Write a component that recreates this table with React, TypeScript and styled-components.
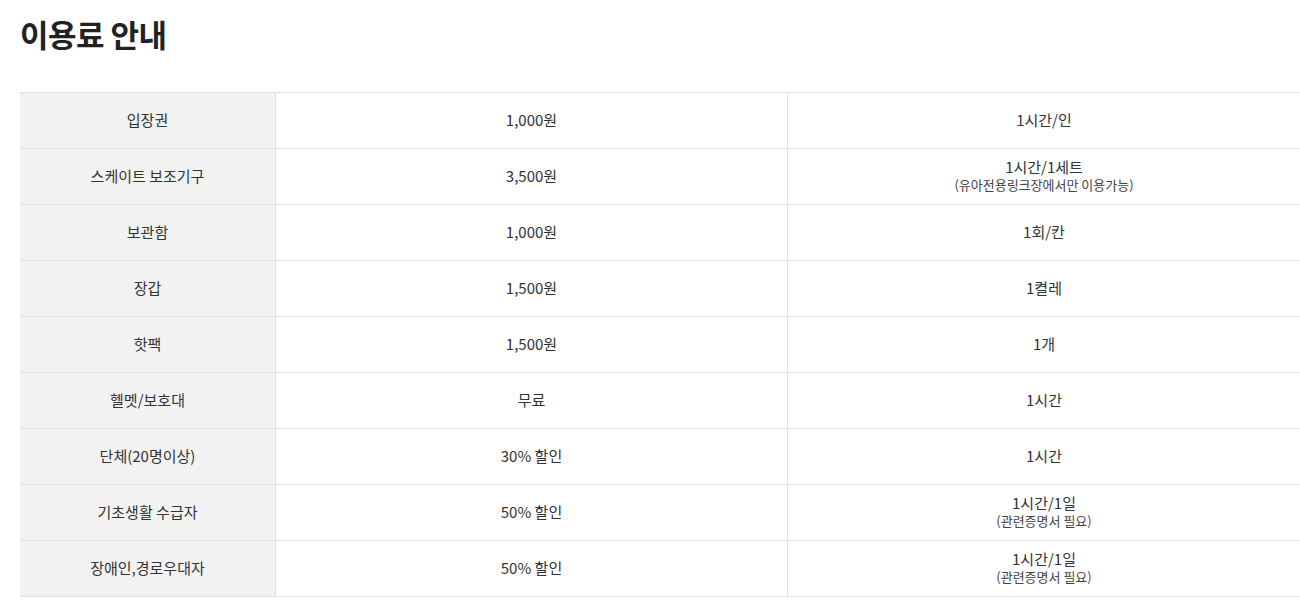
import * as React from "react";
import styled, { createGlobalStyle } from "styled-components";

const GlobalStyle = createGlobalStyle`
  html, body {
    margin: 0;
    padding: 0;
    background: #fff;
  }
  body {
    font-family: "Noto Sans CJK KR", "Noto Sans", sans-serif;
    color: #333;
  }
`;

const Page = styled.div`
  padding: 12px 0 0 20px;
  width: 1280px;
`;

const Title = styled.h2`
  margin: 0 0 36px;
  font-size: 31px;
  font-weight: 700;
  line-height: 44px;
  color: #222;
  letter-spacing: -0.5px;
`;

const Table = styled.table`
  width: 1280px;
  border-collapse: collapse;
  table-layout: fixed;
  border-top: 1px solid #e0e0e0;
`;

const Th = styled.th`
  width: 255px;
  height: 52px;
  padding: 0 0 3px;
  background: #f2f2f2;
  border-bottom: 1px solid #e0e0e0;
  border-right: 1px solid #e0e0e0;
  font-size: 15px;
  font-weight: 400;
  color: #333;
  text-align: center;
  vertical-align: middle;
`;

const Td = styled.td<{ $wide?: boolean }>`
  width: ${(p) => (p.$wide ? "512px" : "511px")};
  height: 52px;
  padding: 0 0 3px;
  border-bottom: 1px solid #e0e0e0;
  border-right: 1px solid #e0e0e0;
  font-size: 15px;
  color: #333;
  text-align: center;
  vertical-align: middle;
  line-height: 19px;
`;

const Note = styled.span`
  display: block;
  font-size: 13px;
  line-height: 17px;
  color: #444;
`;

interface Row {
  item: string;
  price: string;
  unit: string;
  note?: string;
}

const rows: Row[] = [
  { item: "입장권", price: "1,000원", unit: "1시간/인" },
  {
    item: "스케이트 보조기구",
    price: "3,500원",
    unit: "1시간/1세트",
    note: "(유아전용링크장에서만 이용가능)",
  },
  { item: "보관함", price: "1,000원", unit: "1회/칸" },
  { item: "장갑", price: "1,500원", unit: "1켤레" },
  { item: "핫팩", price: "1,500원", unit: "1개" },
  { item: "헬멧/보호대", price: "무료", unit: "1시간" },
  { item: "단체(20명이상)", price: "30% 할인", unit: "1시간" },
  {
    item: "기초생활 수급자",
    price: "50% 할인",
    unit: "1시간/1일",
    note: "(관련증명서 필요)",
  },
  {
    item: "장애인,경로우대자",
    price: "50% 할인",
    unit: "1시간/1일",
    note: "(관련증명서 필요)",
  },
];

const App: React.FC = () => {
  return (
    <Page>
      <GlobalStyle />
      <Title>이용료 안내</Title>
      <Table>
        <tbody>
          {rows.map((r) => (
            <tr key={r.item}>
              <Th scope="row">{r.item}</Th>
              <Td>{r.price}</Td>
              <Td $wide>
                {r.unit}
                {r.note && <Note>{r.note}</Note>}
              </Td>
            </tr>
          ))}
        </tbody>
      </Table>
    </Page>
  );
};

export default App;
